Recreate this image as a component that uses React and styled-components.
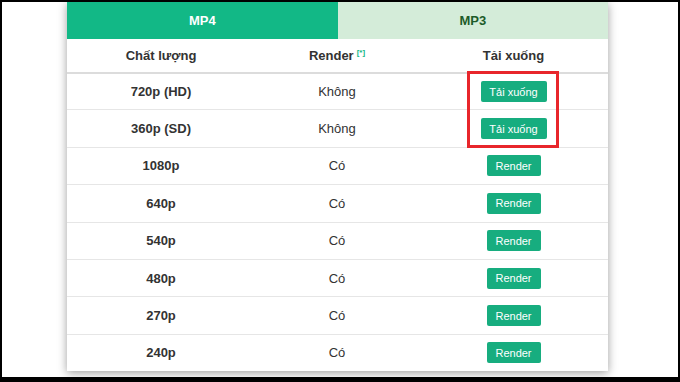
import React from 'react';
import styled, { createGlobalStyle } from 'styled-components';

const GlobalStyle = createGlobalStyle`
    html, body {
        margin: 0;
        padding: 0;
        background: #000;
    }
    body {
        font-family: "Liberation Sans", Arial, sans-serif;
    }
`

const Frame = styled.div`
    margin: 2px 2px 5px 2px;
    width: 676px;
    height: 375px;
    background: #fff;
    padding-left: 65px;
    box-sizing: border-box;
    overflow: hidden;
`

const Card = styled.div`
    position: relative;
    width: 541px;
    background: #fff;
    box-shadow: 0 2px 9px rgba(0, 0, 0, 0.38);
`

const Tabs = styled.div`
    display: grid;
    grid-template-columns: 1fr 1fr;
    height: 37px;
`

const Tab = styled.div`
    display: flex;
    align-items: center;
    justify-content: center;
    font-size: 13px;
    font-weight: bold;
    background: ${p => p.active ? '#12b886' : '#d4ecd9'};
    color: ${p => p.active ? '#fff' : '#1d5c2a'};
`

const Row = styled.div`
    display: grid;
    grid-template-columns: 188px 164px 1fr;
    align-items: center;
    height: ${p => p.head ? '33px' : '37.4px'};
    box-sizing: border-box;
    border-top: ${p => p.head ? 'none' : p.first ? '2px solid #dcdcdc' : '1px solid #e6e6e6'};
    color: #333;
    font-size: 13px;
`

const Cell = styled.div`
    text-align: center;
    font-weight: ${p => p.bold ? 'bold' : 'normal'};
`

const Note = styled.sup`
    color: #12b886;
    font-size: 8px;
    font-weight: bold;
    margin-left: 3px;
`

const Button = styled.button`
    font-family: inherit;
    font-size: 11px;
    color: #fff;
    background: #17ad7f;
    border: none;
    border-radius: 2px;
    height: 21px;
    padding: 0;
    white-space: nowrap;
    width: ${p => p.wide ? '66px' : '54px'};
`

const Highlight = styled.div`
    position: absolute;
    left: 400px;
    top: 69px;
    width: 92px;
    height: 77px;
    box-sizing: border-box;
    border: 3px solid #e8262b;
    pointer-events: none;
`

const rows = [
    { q: '720p (HD)', render: 'Không', btn: 'Tải xuống' },
    { q: '360p (SD)', render: 'Không', btn: 'Tải xuống' },
    { q: '1080p', render: 'Có', btn: 'Render' },
    { q: '640p', render: 'Có', btn: 'Render' },
    { q: '540p', render: 'Có', btn: 'Render' },
    { q: '480p', render: 'Có', btn: 'Render' },
    { q: '270p', render: 'Có', btn: 'Render' },
    { q: '240p', render: 'Có', btn: 'Render' },
];

const App = () => {
    return (
        <>
            <GlobalStyle />
            <Frame>
                <Card>
                    <Tabs>
                        <Tab active>MP4</Tab>
                        <Tab>MP3</Tab>
                    </Tabs>
                    <Row head>
                        <Cell bold>Chất lượng</Cell>
                        <Cell bold>Render<Note>[*]</Note></Cell>
                        <Cell bold>Tải xuống</Cell>
                    </Row>
                    {rows.map((r, i) => (
                        <Row key={r.q} first={i === 0}>
                            <Cell bold>{r.q}</Cell>
                            <Cell>{r.render}</Cell>
                            <Cell><Button wide={r.btn !== 'Render'}>{r.btn}</Button></Cell>
                        </Row>
                    ))}
                    <Highlight />
                </Card>
            </Frame>
        </>
    );
}

export default App;
